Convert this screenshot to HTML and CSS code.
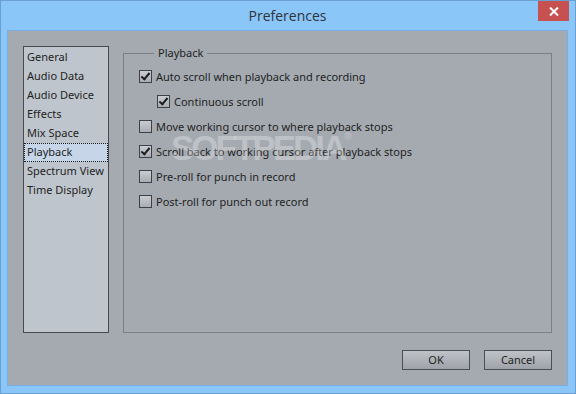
FILE: index.html
```html
<!DOCTYPE html>
<html lang="en">

<head>
  <meta charset="UTF-8" />
  <title>Preferences</title>
  <link rel="stylesheet" href="styles.css">
</head>

<body>
  <div class="window">
    <div class="titlebar">
      <div class="title">Preferences</div>
      <div class="close-btn">
        <svg width="10" height="9" viewBox="0 0 10 9">
          <path d="M1 0.5 L9 8.5 M9 0.5 L1 8.5" stroke="#fff" stroke-width="2" />
        </svg>
      </div>
    </div>

    <div class="client">
      <div class="main-row">
        <div class="category-list">
          <div class="category">General</div>
          <div class="category">Audio Data</div>
          <div class="category">Audio Device</div>
          <div class="category">Effects</div>
          <div class="category">Mix Space</div>
          <div class="category selected">Playback</div>
          <div class="category">Spectrum View</div>
          <div class="category">Time Display</div>
        </div>

        <fieldset class="group">
          <legend>Playback</legend>
          <label class="option"><span class="check checked"></span>Auto scroll when playback and recording</label>
          <label class="option sub"><span class="check checked"></span>Continuous scroll</label>
          <label class="option"><span class="check"></span>Move working cursor to where playback stops</label>
          <label class="option"><span class="check checked"></span>Scroll back to working cursor after playback stops</label>
          <label class="option"><span class="check"></span>Pre-roll for punch in record</label>
          <label class="option"><span class="check"></span>Post-roll for punch out record</label>
        </fieldset>
      </div>

      <div class="button-row">
        <div class="btn">OK</div>
        <div class="btn">Cancel</div>
      </div>
    </div>

    <div class="watermark">SOFTPEDIA<sup>®</sup></div>
  </div>
</body>

</html>
```

FILE: styles.css
```css
body {
  margin: 0;
  font-family: "Noto Sans", "Open Sans", sans-serif;
  font-size: 11px;
  color: #1e1f22;
}

.window {
  position: relative;
  width: 576px;
  height: 394px;
  box-sizing: border-box;
  border: 1px solid #6a9fd4;
  background: #8ac6f8;
  padding: 0 7px 7px 6px;
  display: flex;
  flex-direction: column;
}

.titlebar {
  position: relative;
  height: 29px;
  flex: none;
  display: flex;
  justify-content: center;
  align-items: center;
}

.title {
  font-family: "Open Sans", "Noto Sans", sans-serif;
  font-size: 14px;
  color: #303338;
  margin-top: -1px;
}

.close-btn {
  position: absolute;
  top: 0;
  right: -1px;
  width: 31px;
  height: 20px;
  background: #c75050;
  display: flex;
  justify-content: center;
  align-items: center;
}

.client {
  flex: 1;
  background: #a5aab1;
  border: 1px solid #79aee2;
  padding: 15px 15px 16px 15px;
  display: flex;
  flex-direction: column;
}

.main-row {
  display: flex;
  gap: 14px;
  height: 287px;
}

.category-list {
  width: 86px;
  box-sizing: border-box;
  border: 1px solid #474a51;
  background: #bfc5cd;
  padding-top: 1px;
}

.category {
  height: 19px;
  line-height: 18px;
  padding-left: 3px;
  box-sizing: border-box;
  white-space: nowrap;
}

.category.selected {
  background: #c6d6e8;
  border: 1px dotted #1b1b1b;
  padding-left: 2px;
  line-height: 16px;
}

.group {
  flex: 1;
  margin: 0;
  padding: 4px 0 0 15px;
  border: 1px solid #7b7e84;
  min-width: 0;
}

.group legend {
  padding: 0 4px;
  margin-left: 15px;
  line-height: 14px;
}

.option {
  display: flex;
  align-items: center;
  gap: 4px;
  height: 25px;
  white-space: nowrap;
}

.option.sub {
  padding-left: 18px;
}

.check {
  width: 13px;
  height: 13px;
  box-sizing: border-box;
  border: 1px solid #3d4046;
  background: linear-gradient(#c9cdd2, #a9adb3);
  flex: none;
  position: relative;
}

.check.checked::after {
  content: "";
  position: absolute;
  left: 3px;
  top: 0px;
  width: 3px;
  height: 7px;
  border: solid #1d1e20;
  border-width: 0 2px 2px 0;
  transform: rotate(40deg);
}

.button-row {
  margin-top: auto;
  margin-bottom: -1px;
  display: flex;
  justify-content: flex-end;
  gap: 14px;
}

.btn {
  width: 68px;
  height: 20px;
  box-sizing: border-box;
  border: 1px solid #4b4e54;
  background: linear-gradient(#bfc3c8, #9fa3a9);
  text-align: center;
  line-height: 18px;
}

.watermark {
  position: absolute;
  left: 170px;
  top: 127px;
  font-family: "Liberation Sans", sans-serif;
  font-weight: bold;
  font-size: 35px;
  letter-spacing: -3px;
  color: rgba(255, 255, 255, 0.28);
  pointer-events: none;
}

.watermark sup {
  font-size: 10px;
  letter-spacing: 0;
  vertical-align: 20px;
}
```
